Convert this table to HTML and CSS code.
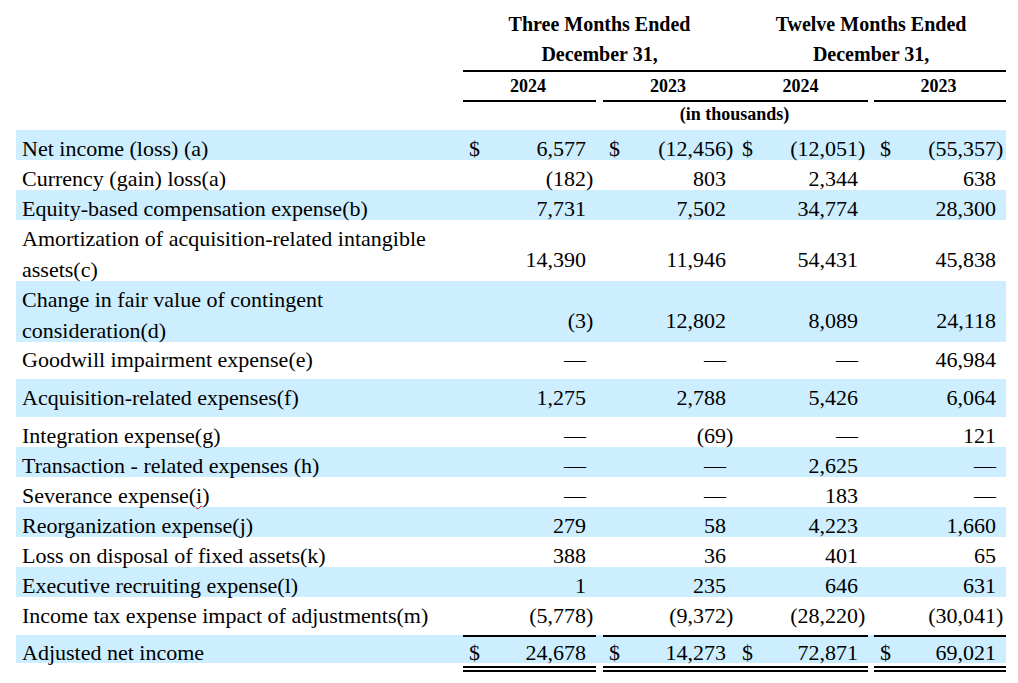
FILE: index.html
```html
<!DOCTYPE html>
<html lang="en">
<head>
<meta charset="utf-8">
<title>Adjusted net income reconciliation</title>
<link rel="stylesheet" href="styles.css">
</head>
<body>
<table class="recon">
  <colgroup>
    <col class="c-label"><col class="c-g1"><col class="c-s1"><col class="c-g2"><col class="c-g3"><col class="c-s2"><col class="c-g4">
  </colgroup>
  <thead>
    <tr class="hd-period">
      <th></th>
      <th colspan="3" class="per">Three Months Ended<br>December 31,</th>
      <th colspan="3" class="per">Twelve Months Ended<br>December 31,</th>
    </tr>
    <tr class="hd-year">
      <th></th>
      <th class="yr">2024</th><th></th><th class="yr">2023</th><th class="yr">2024</th><th></th><th class="yr">2023</th>
    </tr>
    <tr class="hd-unit">
      <th></th>
      <th colspan="6">(in thousands)</th>
    </tr>
  </thead>
  <tbody>
    <tr class="sh">
      <td class="lbl">Net income (loss) (a)</td>
      <td class="v"><div class="cell"><span class="cur">$</span><span class="amt">6,577</span><span class="par"></span></div></td><td></td>
      <td class="v"><div class="cell"><span class="cur">$</span><span class="amt">(12,456</span><span class="par">)</span></div></td>
      <td class="v"><div class="cell"><span class="cur">$</span><span class="amt">(12,051</span><span class="par">)</span></div></td><td></td>
      <td class="v"><div class="cell"><span class="cur">$</span><span class="amt">(55,357</span><span class="par">)</span></div></td>
    </tr>
    <tr>
      <td class="lbl">Currency (gain) loss(a)</td>
      <td class="v"><div class="cell"><span class="amt">(182</span><span class="par">)</span></div></td><td></td>
      <td class="v"><div class="cell"><span class="amt">803</span><span class="par"></span></div></td>
      <td class="v"><div class="cell"><span class="amt">2,344</span><span class="par"></span></div></td><td></td>
      <td class="v"><div class="cell"><span class="amt">638</span><span class="par"></span></div></td>
    </tr>
    <tr class="sh">
      <td class="lbl">Equity-based compensation expense(b)</td>
      <td class="v"><div class="cell"><span class="amt">7,731</span><span class="par"></span></div></td><td></td>
      <td class="v"><div class="cell"><span class="amt">7,502</span><span class="par"></span></div></td>
      <td class="v"><div class="cell"><span class="amt">34,774</span><span class="par"></span></div></td><td></td>
      <td class="v"><div class="cell"><span class="amt">28,300</span><span class="par"></span></div></td>
    </tr>
    <tr class="two">
      <td class="lbl"><div class="wrap2">Amortization of acquisition-related intangible assets(c)</div></td>
      <td class="v"><div class="cell"><span class="amt">14,390</span><span class="par"></span></div></td><td></td>
      <td class="v"><div class="cell"><span class="amt">11,946</span><span class="par"></span></div></td>
      <td class="v"><div class="cell"><span class="amt">54,431</span><span class="par"></span></div></td><td></td>
      <td class="v"><div class="cell"><span class="amt">45,838</span><span class="par"></span></div></td>
    </tr>
    <tr class="sh two">
      <td class="lbl"><div class="wrap2">Change in fair value of contingent consideration(d)</div></td>
      <td class="v"><div class="cell"><span class="amt">(3</span><span class="par">)</span></div></td><td></td>
      <td class="v"><div class="cell"><span class="amt">12,802</span><span class="par"></span></div></td>
      <td class="v"><div class="cell"><span class="amt">8,089</span><span class="par"></span></div></td><td></td>
      <td class="v"><div class="cell"><span class="amt">24,118</span><span class="par"></span></div></td>
    </tr>
    <tr class="tall t37">
      <td class="lbl">Goodwill impairment expense(e)</td>
      <td class="v"><div class="cell"><span class="amt">—</span><span class="par"></span></div></td><td></td>
      <td class="v"><div class="cell"><span class="amt">—</span><span class="par"></span></div></td>
      <td class="v"><div class="cell"><span class="amt">—</span><span class="par"></span></div></td><td></td>
      <td class="v"><div class="cell"><span class="amt">46,984</span><span class="par"></span></div></td>
    </tr>
    <tr class="sh tall">
      <td class="lbl">Acquisition-related expenses(f)</td>
      <td class="v"><div class="cell"><span class="amt">1,275</span><span class="par"></span></div></td><td></td>
      <td class="v"><div class="cell"><span class="amt">2,788</span><span class="par"></span></div></td>
      <td class="v"><div class="cell"><span class="amt">5,426</span><span class="par"></span></div></td><td></td>
      <td class="v"><div class="cell"><span class="amt">6,064</span><span class="par"></span></div></td>
    </tr>
    <tr>
      <td class="lbl">Integration expense(g)</td>
      <td class="v"><div class="cell"><span class="amt">—</span><span class="par"></span></div></td><td></td>
      <td class="v"><div class="cell"><span class="amt">(69</span><span class="par">)</span></div></td>
      <td class="v"><div class="cell"><span class="amt">—</span><span class="par"></span></div></td><td></td>
      <td class="v"><div class="cell"><span class="amt">121</span><span class="par"></span></div></td>
    </tr>
    <tr class="sh">
      <td class="lbl">Transaction - related expenses (h)</td>
      <td class="v"><div class="cell"><span class="amt">—</span><span class="par"></span></div></td><td></td>
      <td class="v"><div class="cell"><span class="amt">—</span><span class="par"></span></div></td>
      <td class="v"><div class="cell"><span class="amt">2,625</span><span class="par"></span></div></td><td></td>
      <td class="v"><div class="cell"><span class="amt">—</span><span class="par"></span></div></td>
    </tr>
    <tr>
      <td class="lbl">Severance expense(<span class="spell">i</span>)</td>
      <td class="v"><div class="cell"><span class="amt">—</span><span class="par"></span></div></td><td></td>
      <td class="v"><div class="cell"><span class="amt">—</span><span class="par"></span></div></td>
      <td class="v"><div class="cell"><span class="amt">183</span><span class="par"></span></div></td><td></td>
      <td class="v"><div class="cell"><span class="amt">—</span><span class="par"></span></div></td>
    </tr>
    <tr class="sh">
      <td class="lbl">Reorganization expense(j)</td>
      <td class="v"><div class="cell"><span class="amt">279</span><span class="par"></span></div></td><td></td>
      <td class="v"><div class="cell"><span class="amt">58</span><span class="par"></span></div></td>
      <td class="v"><div class="cell"><span class="amt">4,223</span><span class="par"></span></div></td><td></td>
      <td class="v"><div class="cell"><span class="amt">1,660</span><span class="par"></span></div></td>
    </tr>
    <tr>
      <td class="lbl">Loss on disposal of fixed assets(k)</td>
      <td class="v"><div class="cell"><span class="amt">388</span><span class="par"></span></div></td><td></td>
      <td class="v"><div class="cell"><span class="amt">36</span><span class="par"></span></div></td>
      <td class="v"><div class="cell"><span class="amt">401</span><span class="par"></span></div></td><td></td>
      <td class="v"><div class="cell"><span class="amt">65</span><span class="par"></span></div></td>
    </tr>
    <tr class="sh">
      <td class="lbl">Executive recruiting expense(l)</td>
      <td class="v"><div class="cell"><span class="amt">1</span><span class="par"></span></div></td><td></td>
      <td class="v"><div class="cell"><span class="amt">235</span><span class="par"></span></div></td>
      <td class="v"><div class="cell"><span class="amt">646</span><span class="par"></span></div></td><td></td>
      <td class="v"><div class="cell"><span class="amt">631</span><span class="par"></span></div></td>
    </tr>
    <tr class="tall">
      <td class="lbl">Income tax expense impact of adjustments(m)</td>
      <td class="v"><div class="cell"><span class="amt">(5,778</span><span class="par">)</span></div></td><td></td>
      <td class="v"><div class="cell"><span class="amt">(9,372</span><span class="par">)</span></div></td>
      <td class="v"><div class="cell"><span class="amt">(28,220</span><span class="par">)</span></div></td><td></td>
      <td class="v"><div class="cell"><span class="amt">(30,041</span><span class="par">)</span></div></td>
    </tr>
    <tr class="sh tot">
      <td class="lbl">Adjusted net income</td>
      <td class="v"><div class="cell"><span class="cur">$</span><span class="amt">24,678</span><span class="par"></span></div></td><td></td>
      <td class="v"><div class="cell"><span class="cur">$</span><span class="amt">14,273</span><span class="par"></span></div></td>
      <td class="v"><div class="cell"><span class="cur">$</span><span class="amt">72,871</span><span class="par"></span></div></td><td></td>
      <td class="v"><div class="cell"><span class="cur">$</span><span class="amt">69,021</span><span class="par"></span></div></td>
    </tr>
    <tr class="rules">
      <td></td>
      <td class="v"><div class="rule"></div></td><td></td>
      <td class="v"><div class="rule"></div></td>
      <td class="v"><div class="rule"></div></td><td></td>
      <td class="v"><div class="rule"></div></td>
    </tr>
  </tbody>
</table>
</body>
</html>
```

FILE: styles.css
```css
html, body {
  margin: 0;
  padding: 0;
  background: #ffffff;
}

body {
  font-family: "Liberation Serif", "Times New Roman", Times, serif;
  color: #000000;
}

.recon {
  margin-left: 16px;
  width: 990px;
  table-layout: fixed;
  border-collapse: separate;
  border-spacing: 0;
}

.c-label { width: 447px; }
.c-g1 { width: 133px; }
.c-s1 { width: 7px; }
.c-g2 { width: 133px; }
.c-g3 { width: 132px; }
.c-s2 { width: 6px; }
.c-g4 { width: 132px; }

/* header */
.recon th {
  padding: 0;
  font-weight: bold;
  text-align: center;
  vertical-align: top;
}

.hd-period th {
  font-size: 20px;
  line-height: 30px;
  padding: 9px 0 1px;
}

.hd-period .per {
  border-bottom: 2px solid #000;
}

.hd-year th {
  font-size: 18px;
  line-height: 22px;
  padding: 3px 0 3px;
}

.hd-year .yr {
  border-bottom: 2px solid #000;
  padding-right: 3px;
}

.hd-unit th {
  font-size: 18px;
  line-height: 22px;
  padding: 1px 0 5px;
}

/* body */
.recon td {
  font-size: 22px;
  line-height: 22px;
  padding: 8px 0 0;
  vertical-align: top;
  white-space: nowrap;
}

.recon tr.sh {
  background: #cceeff;
}

.recon td.lbl {
  padding-left: 6px;
  text-align: left;
  white-space: normal;
}

.recon td.v {
  padding: 8px 2px 0 6px;
}

.cell {
  display: flex;
  justify-content: flex-end;
  align-items: baseline;
}

.cur {
  margin-right: auto;
}

.par {
  flex: 0 0 8px;
  width: 8px;
}

.recon tr.two td.lbl {
  padding-top: 3px;
  line-height: 31px;
}

.wrap2 {
  height: 58px;
}

.recon tr.two td.v {
  padding-top: 29px;
}

.recon tr.tall td {
  padding-bottom: 8px;
}

.recon tr.t37 td {
  padding-top: 7px;
  padding-bottom: 8px;
}

.recon tr.tot td {
  padding-top: 7px;
  line-height: 21px;
}

.recon tr.tot td.v {
  border-top: 2px solid #000;
  padding-top: 5px;
}

.recon tr.rules td {
  padding: 0;
  line-height: 0;
  font-size: 0;
}

.rule {
  margin-top: 3px;
  border-top: 6px double #000;
}

.spell {
  text-decoration: underline wavy #e00000;
  text-decoration-thickness: 1px;
  text-underline-offset: 2px;
}
```
